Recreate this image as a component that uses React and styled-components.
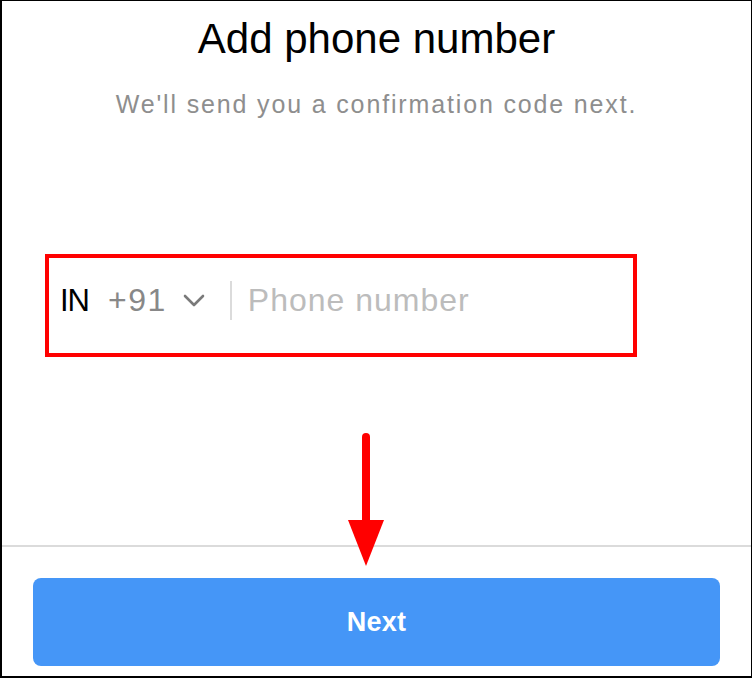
import React from 'react';
import styled, { createGlobalStyle } from 'styled-components';

const GlobalStyle = createGlobalStyle`
  html, body {
    margin: 0;
    padding: 0;
    background: #fff;
  }
  body {
    font-family: "Liberation Sans", Arial, Helvetica, sans-serif;
  }
`;

const Page = styled.div`
  position: relative;
  width: 752px;
  height: 678px;
  box-sizing: border-box;
  border-style: solid;
  border-color: #000;
  border-width: 1px 1px 2px 2px;
  background: #fff;
  display: flex;
  flex-direction: column;
  overflow: hidden;
`;

const Header = styled.header`
  padding-top: 13px;
  text-align: center;
`;

const Title = styled.h1`
  margin: 0;
  font-size: 42px;
  line-height: 50px;
  font-weight: 400;
  color: #000;
  letter-spacing: 0;
`;

const Subtitle = styled.p`
  margin: 25px 0 0;
  font-size: 25px;
  line-height: 30px;
  color: #8e8e8e;
  letter-spacing: 1.85px;
`;

const PhoneField = styled.div`
  margin: 135px 0 0 43px;
  width: 592px;
  height: 103px;
  box-sizing: border-box;
  border: 4px solid #ff0000;
  display: flex;
  align-items: center;
  padding: 0 0 10px 11px;
`;

const Country = styled.span`
  font-size: 31px;
  color: #000;
  letter-spacing: -1px;
`;

const Dial = styled.span`
  margin-left: 19px;
  font-size: 32px;
  color: #888;
  letter-spacing: 1.5px;
`;

const Chevron = styled.svg`
  margin-left: 16px;
  width: 22px;
  height: 13px;
  flex: none;
`;

const Separator = styled.span`
  margin-left: 25px;
  width: 2px;
  height: 39px;
  background: #dbdbdb;
  flex: none;
`;

const PhoneInput = styled.input`
  margin-left: 16px;
  flex: 1;
  min-width: 0;
  border: none;
  outline: none;
  background: transparent;
  padding: 0;
  font-family: inherit;
  font-size: 32px;
  letter-spacing: 1px;
  color: #262626;

  &::placeholder {
    color: #bcbcbc;
  }
`;

const Rule = styled.hr`
  margin: auto 0 0;
  border: none;
  height: 2px;
  background: #dbdbdb;
`;

const Footer = styled.footer`
  padding: 31px 31px 10px;
`;

const NextButton = styled.button`
  display: block;
  width: 100%;
  height: 88px;
  border: none;
  border-radius: 8px;
  background: #4596f7;
  color: #fff;
  font-family: inherit;
  font-size: 27px;
  font-weight: 700;
  letter-spacing: 0.3px;
  cursor: pointer;
`;

const Arrow = styled.svg`
  position: absolute;
  left: 344px;
  top: 427px;
  width: 40px;
  height: 140px;
  pointer-events: none;
`;

export default function App() {
  return (
    <>
      <GlobalStyle />
      <Page>
        <Header>
          <Title>Add phone number</Title>
          <Subtitle>We'll send you a confirmation code next.</Subtitle>
        </Header>

        <PhoneField>
          <Country>IN</Country>
          <Dial>+91</Dial>
          <Chevron viewBox="0 0 22 13">
            <polyline
              points="2,2 11,11 20,2"
              fill="none"
              stroke="#7a7a7a"
              strokeWidth="2.6"
              strokeLinecap="round"
              strokeLinejoin="round"
            />
          </Chevron>
          <Separator />
          <PhoneInput type="tel" placeholder="Phone number" />
        </PhoneField>

        <Rule />
        <Footer>
          <NextButton>Next</NextButton>
        </Footer>

        <Arrow viewBox="0 0 40 140">
          <line x1="20" y1="9" x2="20" y2="95" stroke="#ff0000" strokeWidth="8" strokeLinecap="round" />
          <polygon points="2,92 38,92 20,138" fill="#ff0000" />
        </Arrow>
      </Page>
    </>
  );
}
